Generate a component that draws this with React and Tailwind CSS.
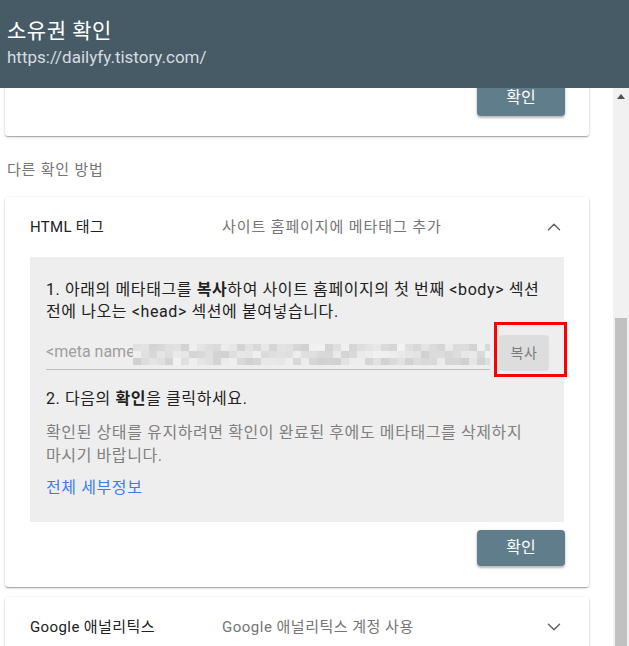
import React from 'react';
import { ChevronUp, ChevronDown } from 'lucide-react';

const font = "font-['Roboto','Noto_Sans_CJK_KR',sans-serif]";

// pixelated (blurred) meta tag value
const BlurredValue = () => {
    const cols = 45;
    const rows = 3;
    const cells = [];
    let seed = 7;
    const rand = () => {
        seed = (seed * 9301 + 49297) % 233280;
        return seed / 233280;
    };
    for (let r = 0; r < rows; r++) {
        for (let c = 0; c < cols; c++) {
            const v = Math.round(208 + rand() * 34);
            cells.push(
                <rect key={r + '-' + c} x={c * 8} y={r * 7} width="8" height="7" fill={`rgb(${v},${v},${v})`} />
            );
        }
    }
    return (
        <svg width="360" height="21" viewBox="0 0 360 21" className="shrink-0 -ml-[2px] mt-[4px]">
            {cells}
        </svg>
    );
};

const ConfirmButton = () => (
    <button className="w-[88px] h-[36px] rounded-[4px] bg-[#607d8b] text-white text-[16px] shadow-[0_2px_2px_rgba(0,0,0,0.2),0_1px_4px_rgba(0,0,0,0.15)]">
        확인
    </button>
);

const cardShadow = 'shadow-[0_1px_1px_rgba(0,0,0,0.14),0_2px_1px_-1px_rgba(0,0,0,0.12),0_1px_3px_rgba(0,0,0,0.2)]';

export default function App() {
    return (
        <div className={`${font} w-[629px] h-[646px] overflow-hidden flex flex-col bg-white`}>
            {/* Header */}
            <header className="h-[88px] shrink-0 bg-[#475b66] px-[7px] pt-[17px] relative z-10">
                <h1 className="text-[21px] leading-[28px] text-white tracking-[0.5px]">소유권 확인</h1>
                <p className="text-[17px] leading-[24px] text-[#d6dde0]">https://dailyfy.tistory.com/</p>
            </header>

            <div className="flex flex-1 min-h-0">
                <main className="flex-1 overflow-hidden">
                    {/* Previous card (scrolled) */}
                    <section className={`ml-[5px] mr-[24px] bg-white rounded-b-[3px] ${cardShadow} -mt-[8px] flex justify-end pr-[24px] pb-[20px]`}>
                        <ConfirmButton />
                    </section>

                    <p className="pl-[7px] pt-[23px] pb-[16px] text-[15px] leading-[22px] text-[#757575] tracking-[0.8px]">다른 확인 방법</p>

                    {/* HTML tag */}
                    <section className={`ml-[5px] mr-[24px] bg-white rounded-[3px] ${cardShadow} px-[25px] pb-[21px]`}>
                        <div className="h-[60px] flex items-center text-[15px]">
                            <span className="w-[192px] text-[#212121] tracking-[0.3px]">HTML 태그</span>
                            <span className="flex-1 text-[#757575] tracking-[0.9px]">사이트 홈페이지에 메타태그 추가</span>
                            <ChevronUp size={22} strokeWidth={1.6} className="text-[#616161] -mr-[1px]" />
                        </div>

                        <div className="bg-[#eeeeee] pt-[22px] pb-[23px] pl-[16px] pr-[15px] text-[16px] leading-[22px] text-[#212121] tracking-[0.6px]">
                            <p>
                                1. 아래의 메타태그를 <b className="font-bold">복사</b>하여 사이트 홈페이지의 첫 번째 &lt;body&gt; 섹션
                                <br />
                                전에 나오는 &lt;head&gt; 섹션에 붙여넣습니다.
                            </p>

                            <div className="mt-[12px] flex items-center gap-[9px] tracking-normal">
                                <div className="flex-1 h-[34px] flex items-center overflow-hidden border-b border-[#bdbdbd] mt-[-1px]">
                                    <span className="text-[#9e9e9e] shrink-0">&lt;meta name</span>
                                    <BlurredValue />
                                </div>
                                <div className="relative">
                                    <button className="w-[50px] h-[36px] rounded-[4px] bg-[#dddddd] text-[14px] text-[#7a7a7a] tracking-[0.5px]">
                                        복사
                                    </button>
                                    <div className="absolute -left-[5px] -top-[13px] w-[73px] h-[55px] border-[3px] border-[#ff0000]" />
                                </div>
                            </div>

                            <p className="mt-[17px]">
                                2. 다음의 <b className="font-bold">확인</b>을 클릭하세요.
                            </p>

                            <p className="mt-[11px] leading-[23px] text-[#808080]">
                                확인된 상태를 유지하려면 확인이 완료된 후에도 메타태그를 삭제하지
                                <br />
                                마시기 바랍니다.
                            </p>

                            <p className="mt-[10px] text-[#3d7cf0]">전체 세부정보</p>
                        </div>

                        <div className="flex justify-end mt-[8px] -mr-[1px]">
                            <ConfirmButton />
                        </div>
                    </section>

                    {/* Google Analytics */}
                    <section className={`mt-[10px] ml-[5px] mr-[24px] bg-white rounded-[3px] ${cardShadow} px-[25px]`}>
                        <div className="h-[60px] flex items-center text-[15px]">
                            <span className="w-[192px] text-[#212121] tracking-[0.4px]">Google 애널리틱스</span>
                            <span className="flex-1 text-[#757575] tracking-[0.5px]">Google 애널리틱스 계정 사용</span>
                            <ChevronDown size={22} strokeWidth={1.6} className="text-[#616161] -mr-[1px]" />
                        </div>
                    </section>
                </main>

                {/* Scrollbar */}
                <div className="w-[16px] shrink-0 bg-[#f1f1f1] flex flex-col">
                    <div className="h-[17px] flex items-center justify-center">
                        <svg width="8" height="5" viewBox="0 0 8 5">
                            <polygon points="4,0 8,5 0,5" fill="#505050" />
                        </svg>
                    </div>
                    <div className="h-[213px]" />
                    <div className="flex-1 mx-[2px] bg-[#c1c1c1]" />
                </div>
            </div>
        </div>
    );
}
